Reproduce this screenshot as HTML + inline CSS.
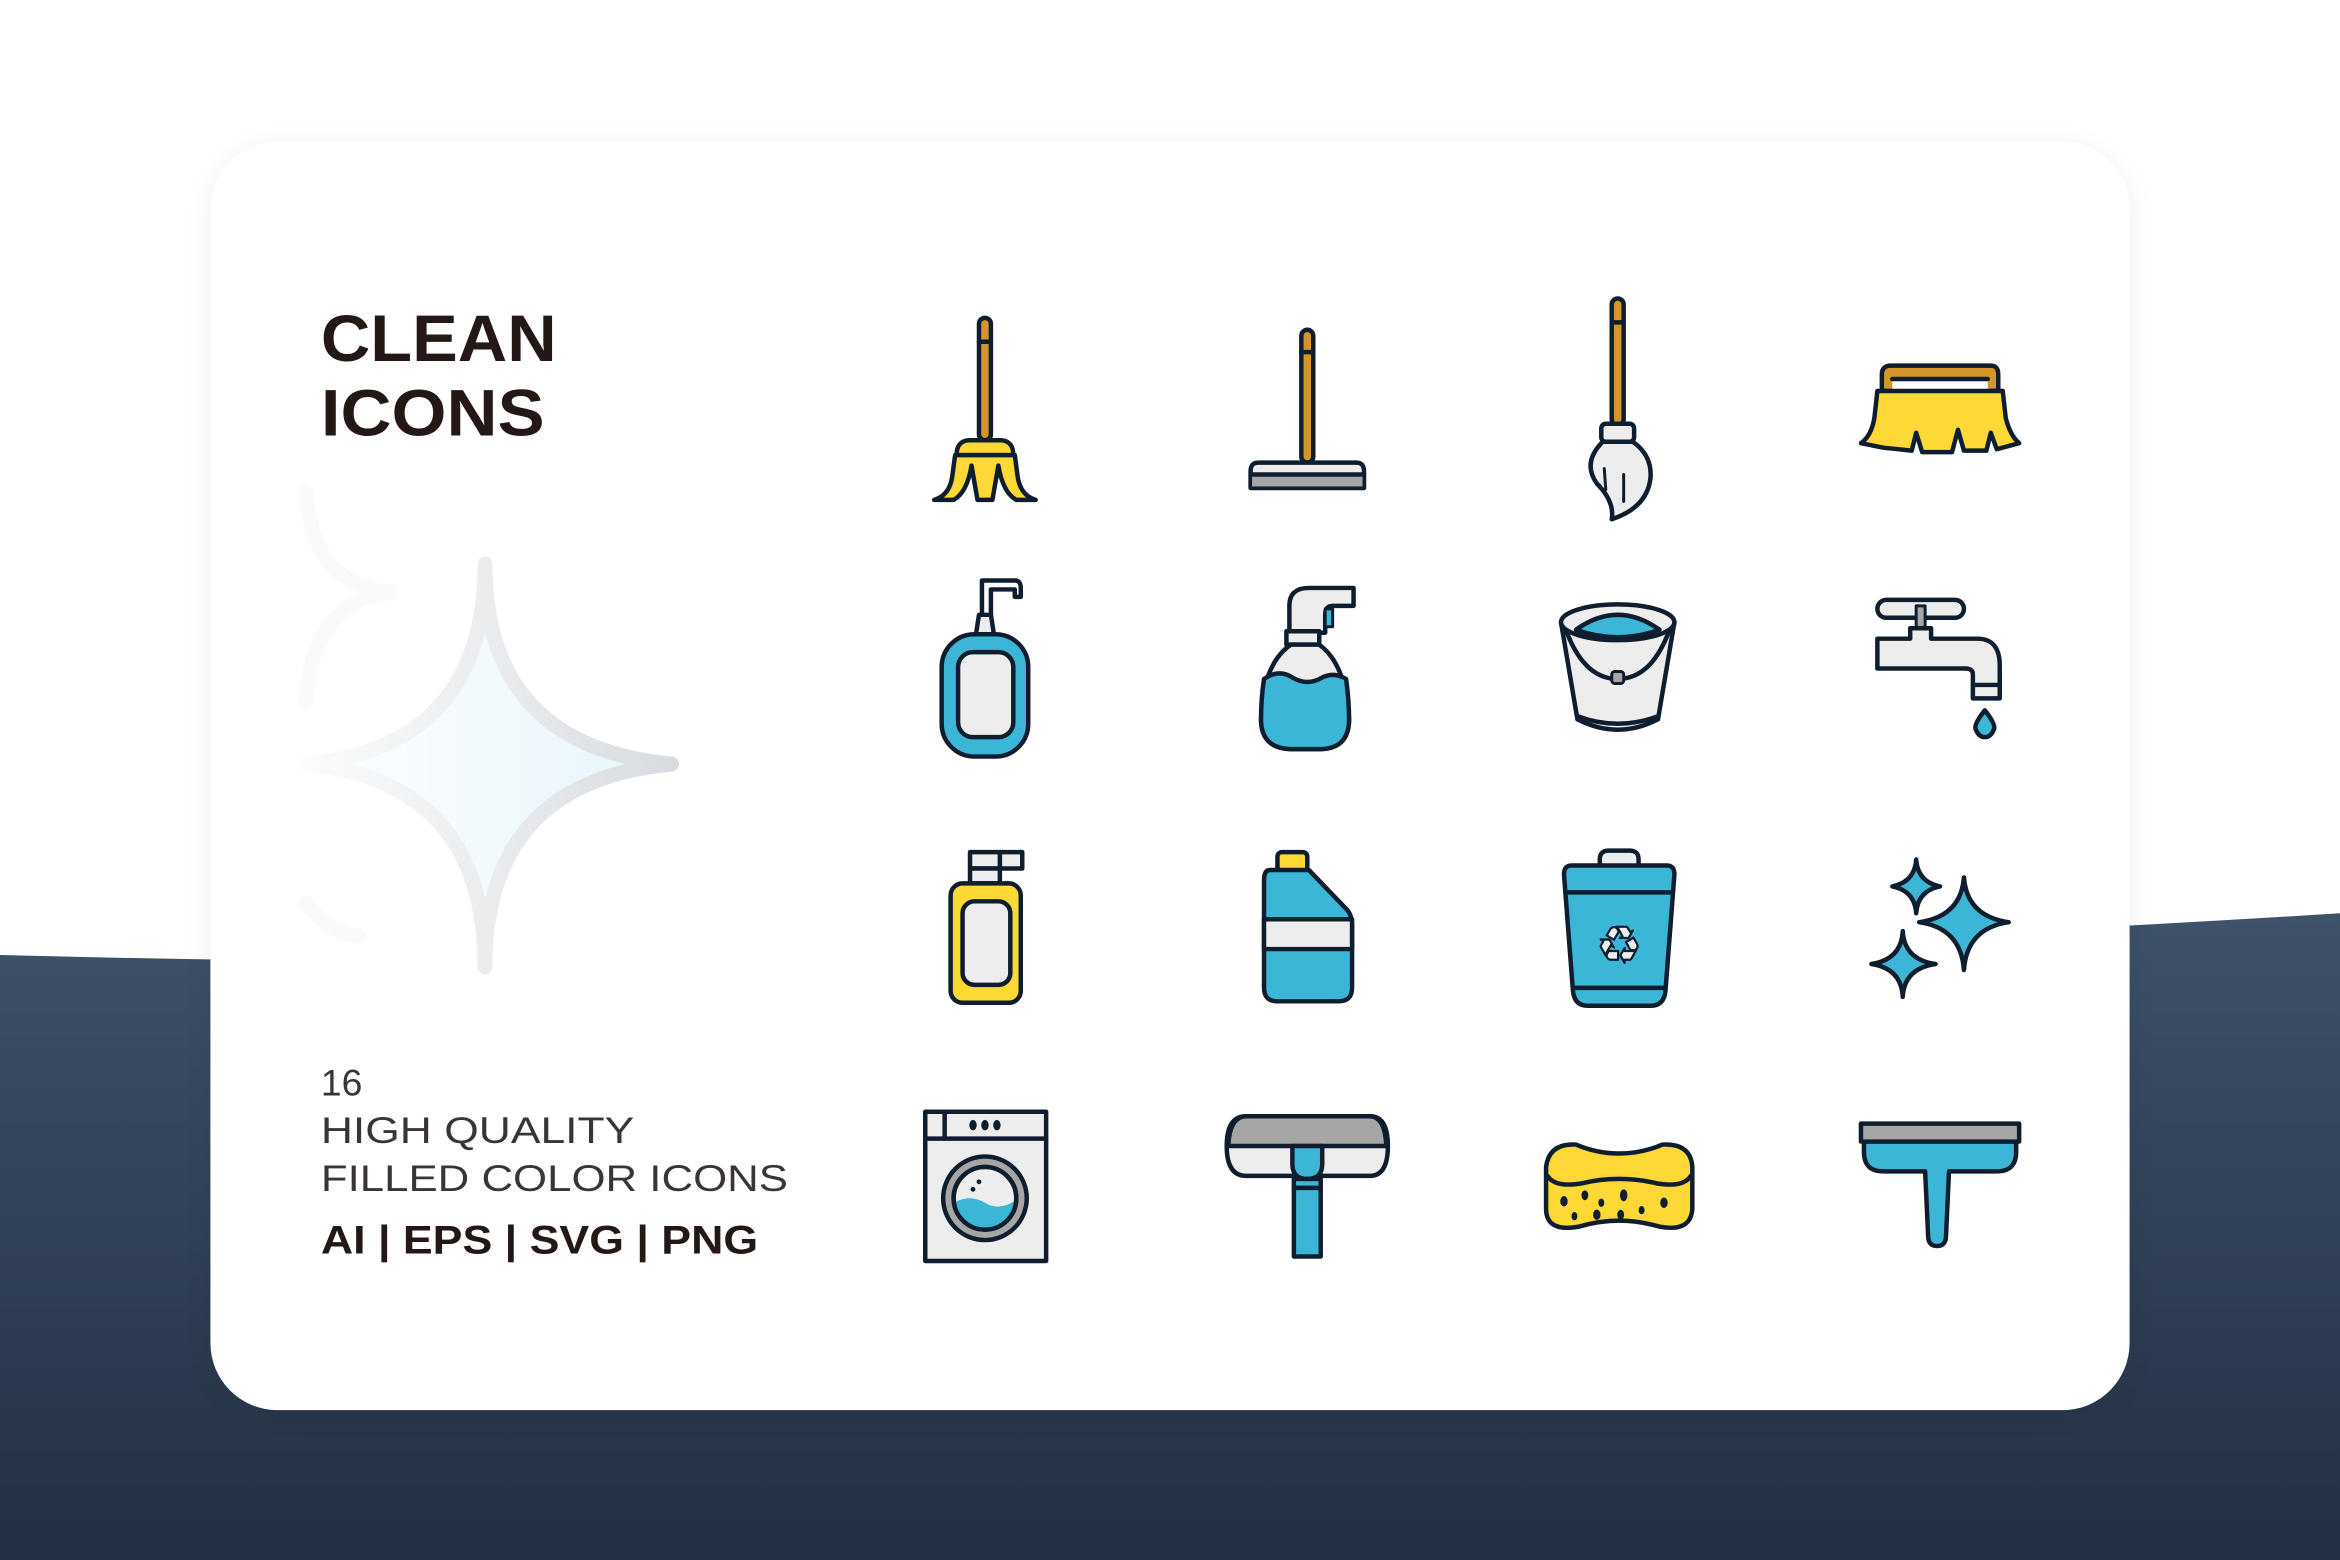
<!DOCTYPE html>
<html><head><meta charset="utf-8"><style>
html,body{margin:0;padding:0;background:#fff;}
svg{display:block;}
</style></head><body>
<svg width="2340" height="1560" viewBox="0 0 1568 1045.4" preserveAspectRatio="none" xmlns="http://www.w3.org/2000/svg">
<defs>
<linearGradient id="bg" x1="0" y1="0" x2="0" y2="1">
<stop offset="0" stop-color="#3e5269"/><stop offset="1" stop-color="#232f43"/>
</linearGradient>
<linearGradient id="sp" x1="0" y1="0" x2="1" y2="0">
<stop offset="0" stop-color="#fcfcfd"/><stop offset="1" stop-color="#d8dce0"/>
</linearGradient>
<linearGradient id="spf" x1="0" y1="0" x2="1" y2="0">
<stop offset="0" stop-color="#fdfeff"/><stop offset="1" stop-color="#e6f5fa"/>
</linearGradient>
<filter id="sh" x="-10%" y="-10%" width="120%" height="120%"><feGaussianBlur stdDeviation="10"/></filter>
<clipPath id="drum"><circle cx="660" cy="803" r="20"/></clipPath>
</defs>
<rect width="1568" height="1045.4" fill="#ffffff"/>
<path d="M0 640 Q800 660 1568 612 V1045.4 H0 Z" fill="url(#bg)"/>
<rect x="141" y="98" width="1286" height="850" rx="45" fill="#000" opacity="0.06" filter="url(#sh)"/>
<rect x="141" y="95" width="1286" height="850" rx="45" fill="#ffffff"/>

<!-- faded sparkles -->
<path d="M205 330 Q210 395 265 397 Q210 400 205 470" fill="none" stroke="#f9fafb" stroke-width="10" stroke-linecap="round"/>
<path d="M205 605 Q220 625 240 627" fill="none" stroke="#f9fafb" stroke-width="10" stroke-linecap="round"/>
<path d="M325 378 Q325 500 450 512 Q325 524 325 648 Q325 524 205 512 Q325 500 325 378 Z" fill="url(#spf)" stroke="url(#sp)" stroke-width="10" stroke-linejoin="round"/>

<g font-family="Liberation Sans, sans-serif" fill="#231815">
<text x="215" y="242" font-size="44" font-weight="bold" textLength="158" lengthAdjust="spacingAndGlyphs">CLEAN</text>
<text x="215" y="292" font-size="44" font-weight="bold" textLength="150" lengthAdjust="spacingAndGlyphs">ICONS</text>
<g fill="#3a3535">
<text x="215" y="734" font-size="25">16</text>
<text x="215" y="766" font-size="25" textLength="210" lengthAdjust="spacingAndGlyphs">HIGH QUALITY</text>
<text x="215" y="798" font-size="25" textLength="313" lengthAdjust="spacingAndGlyphs">FILLED COLOR ICONS</text>
</g>
<text x="215" y="840" font-size="27" font-weight="bold" textLength="293" lengthAdjust="spacingAndGlyphs">AI | EPS | SVG | PNG</text>
</g>

<g stroke="#0f1e2e" stroke-width="3" stroke-linejoin="round" stroke-linecap="round">
<!-- broom -->
<rect x="656" y="213" width="8" height="82" rx="4" fill="#d4952a"/>
<line x1="656" y1="229" x2="664" y2="229"/>
<path d="M641 305 Q641 295 650 295 H670 Q679 295 679 305 Z" fill="#fed935"/>
<path d="M640 305 H680 L682 320 Q684 332 694 335 L681 335 Q672 330 669 312 L665 335 H655 L651 312 Q648 330 639 335 L626 335 Q636 332 638 320 Z" fill="#fed935"/>
<!-- floor squeegee -->
<rect x="872" y="221" width="8" height="89" rx="4" fill="#d4952a"/>
<line x1="872" y1="236" x2="880" y2="236"/>
<path d="M843 310 H909 Q914 310 914 316 V327 H838 V316 Q838 310 843 310 Z" fill="#ededed"/>
<rect x="839" y="318" width="74" height="8" fill="#a6a6a6" stroke="none"/>
<line x1="838" y1="318" x2="914" y2="318"/>
<!-- mop -->
<rect x="1080" y="200" width="8" height="85" rx="4" fill="#d4952a"/>
<line x1="1080" y1="216" x2="1088" y2="216"/>
<rect x="1073" y="284" width="22" height="12" rx="3" fill="#ededed"/>
<path d="M1074 296 H1094 Q1107 305 1106 320 Q1104 340 1080 348 Q1082 336 1070 324 Q1060 310 1074 296 Z" fill="#ededed"/>
<line x1="1075" y1="314" x2="1076" y2="328" stroke-width="2"/>
<line x1="1088" y1="318" x2="1088" y2="336" stroke-width="2"/>
<!-- brush -->
<path d="M1261 262 V251 Q1261 245 1267 245 H1334 Q1339 245 1339 251 V262 Z" fill="#d4952a"/>
<rect x="1268" y="254" width="64" height="8" fill="#ffffff" stroke="none"/>
<line x1="1268" y1="254" x2="1332" y2="254"/>
<path d="M1258 262 H1342 L1344 280 Q1347 292 1353 297 L1338 301 L1334 290 L1331 302 H1316 L1312 288 L1308 303 H1288 L1284 290 L1281 302 L1262 300 L1247 297 Q1254 292 1256 280 Z" fill="#fed935"/>
<!-- soap pump -->
<path d="M658 412 V389 H680 Q684 389 684 394 V400 H680 V395 H664 V412" fill="#ffffff"/>
<path d="M654 425 L656 412 H664 L666 425 Z" fill="#ededed"/>
<rect x="631" y="425" width="58" height="82" rx="22" fill="#3bb6d6"/>
<rect x="642" y="437" width="37" height="57" rx="10" fill="#ededed"/>
<!-- spray -->
<path d="M864 424 V406 Q864 394 877 394 H907 V406 H893 Q888 406 888 412 V424 Z" fill="#ededed"/>
<path d="M888 408 L893 408 L893 420 L888 420 Z" fill="#3bb6d6" stroke-width="2"/>
<rect x="862" y="423" width="22" height="9" fill="#ededed"/>
<path d="M865 432 Q846 445 845 482 Q845 502 866 502 H884 Q904 502 904 482 Q902 445 884 432 Z" fill="#ededed"/>
<path d="M847 455 Q857 448 866 454 Q876 460 886 454 Q894 450 902 455 Q904 470 904 482 Q904 502 884 502 H866 Q845 502 845 482 Q845 468 847 455 Z" fill="#3bb6d6"/>
<!-- bucket -->
<path d="M1046 417 L1057 482 Q1084 496 1111 482 L1122 417 Z" fill="#ededed"/>
<ellipse cx="1084" cy="417" rx="38" ry="12" fill="#ededed"/>
<path d="M1056 422 Q1084 402 1112 422 Q1084 432 1056 422 Z" fill="#3bb6d6"/>
<path d="M1050 424 Q1062 455 1084 455 Q1106 455 1118 424" fill="none"/>
<rect x="1080" y="450" width="8" height="8" rx="2" fill="#a6a6a6" stroke-width="2"/>
<path d="M1057 480 Q1084 490 1111 480" fill="none"/>
<!-- faucet -->
<rect x="1258" y="402" width="58" height="12" rx="6" fill="#ededed"/>
<rect x="1284" y="406" width="6" height="16" fill="#a6a6a6" stroke-width="2"/>
<path d="M1258 428 H1280 V421 H1294 V428 H1325 Q1340 428 1340 446 V468 H1322 V452 Q1322 448 1317 448 H1258 Z" fill="#ededed"/>
<line x1="1322" y1="459" x2="1340" y2="459"/>
<path d="M1330 476 Q1338 486 1336 489 Q1334 494 1330 494 Q1326 494 1324 489 Q1322 486 1330 476 Z" fill="#3bb6d6"/>
<!-- yellow bottle -->
<rect x="650" y="571" width="35" height="11" fill="#ededed"/>
<rect x="650" y="582" width="20" height="10" fill="#ededed"/>
<line x1="670" y1="571" x2="670" y2="582"/>
<rect x="637" y="592" width="47" height="80" rx="8" fill="#fed935"/>
<rect x="645" y="604" width="32" height="56" rx="8" fill="#ededed"/>
<!-- blue jug -->
<rect x="856" y="571" width="20" height="13" rx="3" fill="#fed935"/>
<path d="M851 583 H877 L903 610 Q906 614 906 620 V662 Q906 671 897 671 H856 Q847 671 847 662 V590 Q847 583 851 583 Z" fill="#3bb6d6"/>
<rect x="847" y="616" width="59" height="20" fill="#ededed"/>
<!-- bin -->
<path d="M1072 580 V576 Q1072 570 1078 570 H1092 Q1098 570 1098 576 V580" fill="#ededed"/>
<path d="M1053 580 H1117 Q1122 580 1122 586 L1116 664 Q1115 674 1106 674 H1064 Q1055 674 1054 664 L1048 586 Q1048 580 1053 580 Z" fill="#3bb6d6"/>
<line x1="1049" y1="598" x2="1121" y2="598"/>
<line x1="1055" y1="662" x2="1115" y2="662"/>
</g>
<text x="1085" y="645" font-family="DejaVu Sans, sans-serif" font-size="34" text-anchor="middle" fill="#ededed" stroke="#0f1e2e" stroke-width="1.5">♻</text>

<g stroke="#0f1e2e" stroke-width="3" stroke-linejoin="round" stroke-linecap="round">
<!-- sparkles -->
<path d="M1316 588 Q1318 614 1346 618 Q1318 622 1316 650 Q1314 622 1286 618 Q1314 614 1316 588 Z" fill="#3bb6d6"/>
<path d="M1284 576 Q1285 591 1300 594 Q1285 597 1284 612 Q1283 597 1268 594 Q1283 591 1284 576 Z" fill="#3bb6d6"/>
<path d="M1275 624 Q1276 643 1297 646 Q1276 649 1275 668 Q1274 649 1254 646 Q1274 643 1275 624 Z" fill="#3bb6d6"/>
<!-- washer -->
<rect x="620" y="745" width="81" height="100" fill="#ededed"/>
<line x1="620" y1="763" x2="701" y2="763"/>
<line x1="633" y1="745" x2="633" y2="763"/>
<circle cx="660" cy="803" r="28" fill="#a6a6a6"/>
<circle cx="660" cy="803" r="21" fill="#ededed"/>
<path d="M639 806 Q650 800 660 806 Q670 812 681 804 V830 H639 Z" fill="#3bb6d6" stroke="none" clip-path="url(#drum)"/>
<circle cx="660" cy="803" r="21" fill="none"/>
</g>
<g fill="#0f1e2e">
<ellipse cx="652" cy="754" rx="2.5" ry="3.5"/><ellipse cx="660" cy="754" rx="2.5" ry="3.5"/><ellipse cx="668" cy="754" rx="2.5" ry="3.5"/>
<circle cx="656" cy="792" r="1.6"/><circle cx="652" cy="797" r="1.6"/>
</g>
<g stroke="#0f1e2e" stroke-width="3" stroke-linejoin="round" stroke-linecap="round">
<!-- window squeegee -->
<path d="M835 748 H918 Q930 748 930 768 Q930 788 918 788 H835 Q822 788 822 768 Q822 748 835 748 Z" fill="#ededed"/>
<path d="M835 748 H918 Q928 748 929 768 H823 Q824 748 835 748 Z" fill="#a6a6a6"/>
<path d="M866 768 V780 Q866 790 876 790 Q886 790 886 780 V768 Z" fill="#3bb6d6"/>
<rect x="867" y="790" width="18" height="52" fill="#3bb6d6"/>
<line x1="867" y1="796" x2="885" y2="796"/>
<!-- sponge -->
<path d="M1036 782 Q1038 766 1056 767 Q1070 773 1085 773 Q1100 773 1114 767 Q1133 766 1134 782 L1134 810 Q1133 826 1112 822 Q1098 818 1085 818 Q1072 818 1058 822 Q1036 826 1036 810 Z" fill="#fed935"/>
<path d="M1037 788 Q1042 796 1060 793 Q1072 790 1085 790 Q1098 790 1110 793 Q1128 796 1133 788" fill="none"/>
<!-- squeegee -->
<path d="M1249 765 H1351 V772 Q1351 785 1338 785 H1306 L1304 828 Q1304 835 1298 835 Q1292 835 1292 828 L1290 785 H1262 Q1249 785 1249 772 Z" fill="#3bb6d6"/>
<rect x="1247" y="753" width="106" height="12" fill="#a6a6a6"/>
</g>
<g fill="#0f1e2e">
<ellipse cx="1048" cy="805" rx="2.5" ry="3.5"/><ellipse cx="1062" cy="801" rx="2.3" ry="3.3"/><ellipse cx="1073" cy="806" rx="2" ry="2.8"/><ellipse cx="1088" cy="801" rx="2.5" ry="4"/>
<ellipse cx="1055" cy="815" rx="2" ry="2.8"/><ellipse cx="1070" cy="814" rx="2.5" ry="3.5"/><ellipse cx="1086" cy="814" rx="2.3" ry="3.3"/><ellipse cx="1100" cy="811" rx="2" ry="2.8"/>
<ellipse cx="1115" cy="806" rx="2.5" ry="3.5"/>
</g>
</svg>
</body></html>
